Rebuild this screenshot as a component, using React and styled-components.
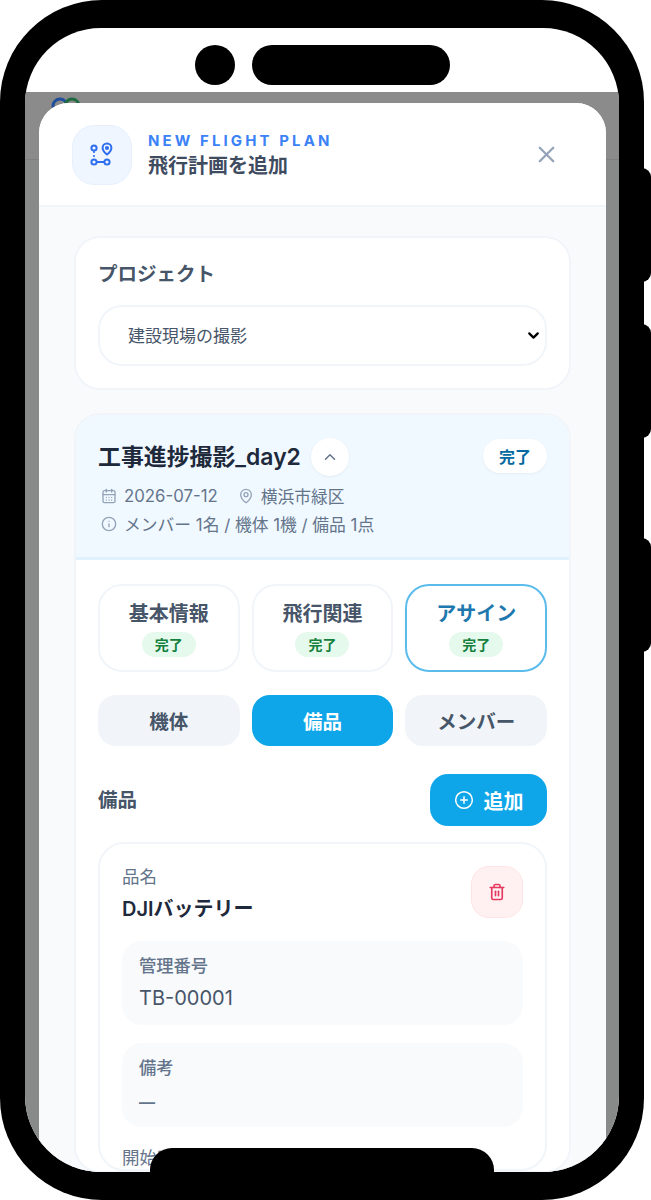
import React from "react";
import styled, { createGlobalStyle } from "styled-components";
import { CalendarDays, ChevronDown, ChevronUp, CirclePlus, Info, MapPin, Trash2, X } from "lucide-react";

const Global = createGlobalStyle`
  html, body { margin: 0; padding: 0; background: #fff; }
  body { width: 651px; height: 1200px; overflow: hidden; font-family: Inter, "Noto Sans CJK JP", sans-serif; }
  * { box-sizing: border-box; }
`;

const Device = styled.div`
  position: relative;
  width: 644px;
  height: 1200px;
`;

const SideKey = styled.div`
  position: absolute;
  left: 640px;
  top: ${(p) => p.$top}px;
  width: 11px;
  height: 114px;
  background: #000;
  border-radius: 0 9px 9px 0;
`;

const Bezel = styled.div`
  height: 100%;
  background: #000;
  border-radius: 102px;
  padding: 28px 25px;
`;

const Screen = styled.div`
  position: relative;
  height: 100%;
  background: #fff;
  border-radius: 76px;
  overflow: hidden;
  display: flex;
  flex-direction: column;
`;

const StatusArea = styled.div`
  flex: 0 0 64px;
  display: flex;
  justify-content: center;
  gap: 17px;
  padding-top: 17px;
`;

const Camera = styled.div`
  width: 40px;
  height: 40px;
  border-radius: 50%;
  background: #000;
`;

const Island = styled.div`
  width: 198px;
  height: 40px;
  border-radius: 20px;
  background: #000;
`;

const Backdrop = styled.div`
  position: relative;
  flex: 1;
  min-height: 0;
  background: #888989;
  padding: 11px 13px 0 14px;
`;

const DimmedBar = styled.div`
  position: absolute;
  inset: 0 0 auto 0;
  height: 68px;
  background: #8b8b8b;
  border-bottom: 1px solid #7f8080;
`;

const DimmedLogo = styled.svg`
  position: absolute;
  left: 26px;
  top: 4px;
`;

const Modal = styled.div`
  position: relative;
  height: 100%;
  background: #f8fafc;
  border-radius: 30px 30px 0 0;
  overflow: hidden;
`;

const ModalHeader = styled.header`
  height: 104px;
  background: #fff;
  border-bottom: 2px solid #f1f5f9;
  display: flex;
  align-items: center;
  padding: 1px 46px 0 33px;
  gap: 16px;
`;

const HeaderIcon = styled.div`
  width: 60px;
  height: 60px;
  border-radius: 22px;
  background: #eff6ff;
  border: 1px solid #e6effb;
  display: flex;
  align-items: center;
  justify-content: center;
`;

const HeaderText = styled.div`
  flex: 1;
  display: flex;
  flex-direction: column;
  gap: 2px;
`;

const Eyebrow = styled.div`
  font-size: 15px;
  line-height: 20px;
  font-weight: 700;
  letter-spacing: 3.1px;
  color: #3b82f6;
`;

const ModalTitle = styled.div`
  font-size: 20px;
  line-height: 26px;
  font-weight: 600;
  color: #3f4c5f;
`;

const CloseButton = styled.button`
  border: 0;
  padding: 0;
  background: none;
  color: #94a3b8;
  display: flex;
`;

const ModalBody = styled.div`
  padding: 29px 35px 0;
  display: flex;
  flex-direction: column;
  gap: 23px;
`;

const Card = styled.section`
  background: #fff;
  border: 2px solid #f1f5f9;
  border-radius: 26px;
  overflow: hidden;
`;

const ProjectCard = styled(Card)`
  height: 154px;
  padding: 22px 22px 0;
`;

const FieldTitle = styled.label`
  display: block;
  font-size: 19.5px;
  line-height: 28px;
  font-weight: 600;
  color: #475569;
  margin-bottom: 17px;
`;

const SelectWrap = styled.div`
  position: relative;
  svg {
    position: absolute;
    right: 5px;
    top: 22px;
    color: #000;
    pointer-events: none;
  }
`;

const ProjectSelect = styled.select`
  appearance: none;
  display: block;
  width: 100%;
  height: 61px;
  padding: 0 34px 0 28px;
  background: #fff;
  border: 2px solid #f1f5f9;
  border-radius: 24px;
  font-family: inherit;
  font-size: 17px;
  color: #475569;
`;

const FlightHeader = styled.div`
  height: 145px;
  background: #f0f9ff;
  border-bottom: 3px solid #e0f2fe;
  padding: 23px 22px 0;
`;

const FlightTop = styled.div`
  display: flex;
  align-items: center;
  gap: 10px;
  height: 38px;
`;

const FlightName = styled.h2`
  margin: 0;
  font-size: 22.9px;
  line-height: 28px;
  font-weight: 600;
  color: #1e293b;
`;

const RoundToggle = styled.button`
  width: 38px;
  height: 38px;
  padding: 0;
  border: 0;
  border-radius: 50%;
  background: #fff;
  color: #64748b;
  display: flex;
  align-items: center;
  justify-content: center;
  box-shadow: 0 1px 3px rgba(15, 23, 42, 0.06);
`;

const StatusBadge = styled.span`
  margin: 0 0 2px auto;
  width: 64px;
  height: 34px;
  border-radius: 17px;
  background: #fff;
  color: #0369a1;
  font-size: 16px;
  font-weight: 600;
  display: flex;
  align-items: center;
  justify-content: center;
  box-shadow: 0 1px 3px rgba(15, 23, 42, 0.05);
`;

const MetaRow = styled.div`
  display: flex;
  align-items: center;
  height: 28px;
  margin-top: ${(p) => (p.$first ? "6px" : "0")};
  font-size: 16.8px;
  color: #64748b;
  svg { flex: none; color: #94a3b8; margin: 0 7px 0 3px; }
`;

const MetaGap = styled.span`
  display: inline-block;
  width: 17px;
`;

const FlightBody = styled.div`
  padding: 24px 22px 0;
`;

const TileGrid = styled.div`
  display: grid;
  grid-template-columns: repeat(3, 1fr);
  gap: 12px;
`;

const StepTile = styled.div`
  height: 88px;
  border-radius: 24px;
  background: #fff;
  border: 2px solid ${(p) => (p.$active ? "#5bbcec" : "#f1f5f9")};
  display: flex;
  flex-direction: column;
  align-items: center;
  padding-top: 15px;
  gap: 5px;
  font-size: 20px;
  line-height: 26px;
  font-weight: 600;
  color: ${(p) => (p.$active ? "#1f78ad" : "#475569")};
`;

const DoneChip = styled.span`
  width: 54px;
  height: 25px;
  border-radius: 13px;
  background: #e5f9ed;
  color: #15803d;
  font-size: 14px;
  font-weight: 600;
  display: flex;
  align-items: center;
  justify-content: center;
`;

const SubTabs = styled(TileGrid)`
  margin-top: 23px;
`;

const SubTab = styled.div`
  height: 51px;
  border-radius: 18px;
  background: ${(p) => (p.$active ? "#0ea5e9" : "#f1f5f9")};
  color: ${(p) => (p.$active ? "#fff" : "#475569")};
  font-size: 19.5px;
  font-weight: 600;
  display: flex;
  align-items: center;
  justify-content: center;
`;

const SectionHead = styled.div`
  margin-top: 28px;
  display: flex;
  align-items: center;
  justify-content: space-between;
`;

const SectionTitle = styled.h3`
  margin: 0 0 3px;
  font-size: 19.5px;
  font-weight: 600;
  color: #475569;
`;

const AddButton = styled.button`
  width: 117px;
  height: 52px;
  border: 0;
  border-radius: 18px;
  background: #0ea5e9;
  color: #fff;
  font-family: inherit;
  font-size: 20px;
  font-weight: 600;
  display: flex;
  align-items: center;
  justify-content: center;
  gap: 10px;
`;

const ItemCard = styled.article`
  margin-top: 16px;
  border: 2px solid #f1f5f9;
  border-radius: 26px;
  padding: 22px 22px 0;
`;

const ItemTop = styled.div`
  display: flex;
  justify-content: space-between;
`;

const ItemLabel = styled.div`
  font-size: 17.5px;
  line-height: 22px;
  color: #64748b;
`;

const ItemName = styled.div`
  margin-top: 10px;
  font-size: 20px;
  line-height: 22px;
  font-weight: 600;
  color: #1e293b;
`;

const DeleteButton = styled.button`
  width: 52px;
  height: 52px;
  padding: 0;
  border: 1px solid #ffe4e6;
  border-radius: 18px;
  background: #fff1f2;
  color: #e5395f;
  display: flex;
  align-items: center;
  justify-content: center;
`;

const DetailBox = styled.div`
  height: 84px;
  margin-top: ${(p) => p.$gap}px;
  padding: 15px 17px 0;
  border-radius: 20px;
  background: #f8fafc;
`;

const DetailLabel = styled.div`
  font-size: 17.3px;
  line-height: 20px;
  font-weight: 500;
  color: #64748b;
`;

const DetailValue = styled.div`
  margin-top: ${(p) => (p.$muted ? "11px" : "9px")};
  font-size: ${(p) => (p.$muted ? "16px" : "20px")};
  font-weight: ${(p) => (p.$muted ? 600 : 400)};
  line-height: 26px;
  color: ${(p) => (p.$muted ? "#64748b" : "#475569")};
`;

const TimeGrid = styled.div`
  margin-top: 20px;
  display: grid;
  grid-template-columns: 1fr 1fr;
  gap: 16px;
`;

const HomeBar = styled.div`
  position: absolute;
  left: 125px;
  bottom: 0;
  width: 344px;
  height: 24px;
  background: #000;
  border-radius: 22px 22px 0 0;
`;

const HomeBarBase = styled.div`
  position: absolute;
  left: 150px;
  top: 1172px;
  width: 344px;
  height: 28px;
  background: #000;
`;

// Two-pin route mark used in the sheet header
const RouteMark = () => (
  <svg width="26" height="26" viewBox="0 0 26 26" fill="none" stroke="#2f6fed" strokeWidth="2">
    <circle cx="5" cy="6" r="2.6" />
    <path d="M5 9v2M5 13v2" strokeWidth="1.6" />
    <path d="M18 1.5a4.4 4.4 0 0 1 4.4 4.4c0 3-4.4 6.6-4.4 6.6s-4.4-3.6-4.4-6.6A4.4 4.4 0 0 1 18 1.5z" />
    <circle cx="18" cy="6" r="1.1" fill="#2f6fed" />
    <circle cx="5" cy="20" r="2.6" />
    <circle cx="18" cy="20" r="2.6" />
    <path d="M8 20h7" />
  </svg>
);

export default function App() {
  return (
    <>
      <Global />
      <Device>
        <SideKey $top={168} />
        <SideKey $top={324} />
        <SideKey $top={538} />
        <Bezel>
          <Screen>
            <StatusArea>
              <Camera />
              <Island />
            </StatusArea>
            <Backdrop>
              <DimmedBar />
              <DimmedLogo width="30" height="14" viewBox="0 0 30 14" fill="none" strokeWidth="3">
                <circle cx="9" cy="10" r="7" stroke="#1f4f9c" />
                <circle cx="21" cy="10" r="7" stroke="#1f6b3f" />
              </DimmedLogo>
              <Modal>
                <ModalHeader>
                  <HeaderIcon>
                    <RouteMark />
                  </HeaderIcon>
                  <HeaderText>
                    <Eyebrow>NEW FLIGHT PLAN</Eyebrow>
                    <ModalTitle>飛行計画を追加</ModalTitle>
                  </HeaderText>
                  <CloseButton aria-label="閉じる">
                    <X size={27} strokeWidth={2} />
                  </CloseButton>
                </ModalHeader>
                <ModalBody>
                  <ProjectCard>
                    <FieldTitle>プロジェクト</FieldTitle>
                    <SelectWrap>
                      <ProjectSelect defaultValue="site">
                        <option value="site">建設現場の撮影</option>
                      </ProjectSelect>
                      <ChevronDown size={17} strokeWidth={3.2} />
                    </SelectWrap>
                  </ProjectCard>
                  <Card>
                    <FlightHeader>
                      <FlightTop>
                        <FlightName>工事進捗撮影_day2</FlightName>
                        <RoundToggle aria-label="折りたたむ">
                          <ChevronUp size={18} strokeWidth={2} />
                        </RoundToggle>
                        <StatusBadge>完了</StatusBadge>
                      </FlightTop>
                      <MetaRow $first>
                        <CalendarDays size={16} />
                        2026-07-12
                        <MetaGap />
                        <MapPin size={16} />
                        横浜市緑区
                      </MetaRow>
                      <MetaRow>
                        <Info size={16} />
                        メンバー 1名 / 機体 1機 / 備品 1点
                      </MetaRow>
                    </FlightHeader>
                    <FlightBody>
                      <TileGrid>
                        <StepTile>
                          基本情報
                          <DoneChip>完了</DoneChip>
                        </StepTile>
                        <StepTile>
                          飛行関連
                          <DoneChip>完了</DoneChip>
                        </StepTile>
                        <StepTile $active>
                          アサイン
                          <DoneChip>完了</DoneChip>
                        </StepTile>
                      </TileGrid>
                      <SubTabs>
                        <SubTab>機体</SubTab>
                        <SubTab $active>備品</SubTab>
                        <SubTab>メンバー</SubTab>
                      </SubTabs>
                      <SectionHead>
                        <SectionTitle>備品</SectionTitle>
                        <AddButton>
                          <CirclePlus size={20} strokeWidth={1.8} />
                          追加
                        </AddButton>
                      </SectionHead>
                      <ItemCard>
                        <ItemTop>
                          <div>
                            <ItemLabel>品名</ItemLabel>
                            <ItemName>DJIバッテリー</ItemName>
                          </div>
                          <DeleteButton aria-label="削除">
                            <Trash2 size={18} strokeWidth={2.2} />
                          </DeleteButton>
                        </ItemTop>
                        <DetailBox $gap={21}>
                          <DetailLabel>管理番号</DetailLabel>
                          <DetailValue>TB-00001</DetailValue>
                        </DetailBox>
                        <DetailBox $gap={18}>
                          <DetailLabel>備考</DetailLabel>
                          <DetailValue $muted>—</DetailValue>
                        </DetailBox>
                        <TimeGrid>
                          <ItemLabel>開始時間</ItemLabel>
                          <ItemLabel>終了時間</ItemLabel>
                        </TimeGrid>
                      </ItemCard>
                    </FlightBody>
                  </Card>
                </ModalBody>
              </Modal>
            </Backdrop>
            <HomeBar />
          </Screen>
        </Bezel>
        <HomeBarBase />
      </Device>
    </>
  );
}
